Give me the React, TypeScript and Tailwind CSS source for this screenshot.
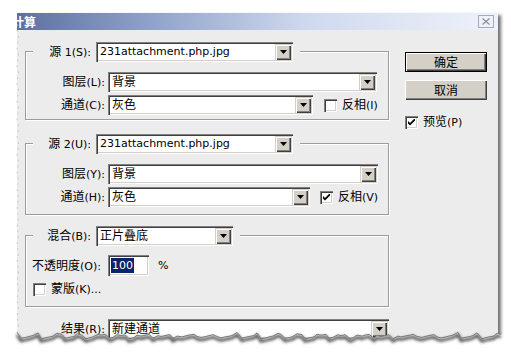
import React from 'react';

const sunken =
  'shadow-[inset_1px_1px_0_#808080,inset_2px_2px_0_#404040,inset_-1px_-1px_0_#ffffff,inset_-2px_-2px_0_#d4d0c8]';
const raised =
  'shadow-[inset_1px_1px_0_#d4d0c8,inset_2px_2px_0_#ffffff,inset_-1px_-1px_0_#404040,inset_-2px_-2px_0_#808080]';

function T({ s }: { s: string }) {
  const parts = s.split(/([\u3400-\u9fff]+)/);
  return (
    <>
      {parts.map((p, i) =>
        i % 2 ? (
          <span key={i} className="font-['Noto_Sans_CJK_SC',sans-serif] text-[12px]">
            {p}
          </span>
        ) : (
          <React.Fragment key={i}>{p}</React.Fragment>
        )
      )}
    </>
  );
}

function Combo({ cls, text }: { cls: string; text: string }) {
  return (
    <div className={`flex h-[20px] shrink-0 items-center bg-white ${sunken} ${cls}`}>
      <span className="flex-1 overflow-hidden whitespace-nowrap pl-[4px] leading-[16px]">
        <T s={text} />
      </span>
      <span className={`mr-[2px] flex h-[16px] w-[16px] items-center justify-center bg-[#d4d0c8] ${raised}`}>
        <svg width="7" height="4" viewBox="0 0 7 4">
          <path d="M0 0h7L3.5 4z" fill="#000" />
        </svg>
      </span>
    </div>
  );
}

function Check({ on }: { on?: boolean }) {
  return (
    <span className={`flex h-[13px] w-[13px] shrink-0 items-center justify-center bg-white ${sunken}`}>
      {on && (
        <svg width="7" height="7" viewBox="0 0 7 7">
          <path d="M0 2L2 4L7 -1V1.6L2 6.6L0 4.6Z" fill="#000" />
        </svg>
      )}
    </span>
  );
}

const pts: { x: number; y: number }[] = [];
{
  let i = 0;
  let x = 17;
  while (x <= 502) {
    const y = 336.5 + (((i * 53) % 11) - 5) * 0.45 + ((i * 17) % 5 === 0 ? -1.8 : 0);
    pts.push({ x, y });
    i++;
    x += 3 + ((i * 7) % 3);
  }
}
const edge = pts.map((p) => `${p.x},${p.y.toFixed(1)}`).join(' ');
const first = pts[0];
const last = pts[pts.length - 1];

const leftPts: string[] = [];
for (let y = 30, i = 0; y <= 336; y += 6, i++) {
  leftPts.push(`${17 + ((i * 5) % 3) * 0.8},${y}`);
}

export default function App() {
  return (
    <div className="relative h-[360px] w-[511px] overflow-hidden bg-white font-['DejaVu_Sans','Noto_Sans_CJK_SC',sans-serif] text-[11px] text-black">
      <div className="ml-[17px] mt-[13px] h-[332px] w-[481px] overflow-hidden bg-[#ececec] shadow-[3px_2px_3px_rgba(0,0,0,0.55)]">
        {/* Title bar */}
        <div className="flex h-[17px] items-center justify-between bg-[linear-gradient(to_right,#5d70a0,#94a6cc_30%,#cfd9ee_60%,#eef2fa)]">
          <span className="-ml-[5px] font-['Noto_Sans_CJK_SC',sans-serif] text-[12px] font-bold leading-none text-white">
            计算
          </span>
          <span className="mr-[4px] flex h-[13px] w-[16px] items-center justify-center border border-[#a3abbb] bg-[#eef1f7]">
            <svg width="8" height="7" viewBox="0 0 8 7">
              <path d="M0.5 0.5L7.5 6.5M7.5 0.5L0.5 6.5" stroke="#8a8f99" strokeWidth="1.2" />
            </svg>
          </span>
        </div>

        {/* Body */}
        <div className="flex">
          <div className="w-[372px] pl-[8px] pt-[21px]">
            {/* Group 1 */}
            <div className="border border-[#9c9c9c] pb-[4px] shadow-[inset_1px_1px_0_#fff,1px_1px_0_#fff]">
              <div className="-mt-[10px] ml-[7px] flex w-fit items-center bg-[#ececec] pr-[7px]">
                <span className="w-[63px] pr-[5px] text-right leading-[14px]">
                  <T s="源 1(S):" />
                </span>
                <Combo cls="w-[197px]" text="231attachment.php.jpg" />
              </div>
              <div className="mt-[10px] flex items-center">
                <span className="w-[82px] pr-[3px] text-right leading-[14px]">
                  <T s="图层(L):" />
                </span>
                <Combo cls="w-[269px]" text="背景" />
              </div>
              <div className="mt-[3px] flex items-center">
                <span className="w-[82px] pr-[3px] text-right leading-[14px]">
                  <T s="通道(C):" />
                </span>
                <Combo cls="w-[205px]" text="灰色" />
                <span className="ml-[11px]">
                  <Check />
                </span>
                <span className="ml-[5px] leading-[14px]">
                  <T s="反相(I)" />
                </span>
              </div>
            </div>

            {/* Group 2 */}
            <div className="mt-[23px] border border-[#9c9c9c] pb-[7px] shadow-[inset_1px_1px_0_#fff,1px_1px_0_#fff]">
              <div className="-mt-[10px] ml-[7px] flex w-fit items-center bg-[#ececec] pr-[7px]">
                <span className="w-[63px] pr-[5px] text-right leading-[14px]">
                  <T s="源 2(U):" />
                </span>
                <Combo cls="w-[197px]" text="231attachment.php.jpg" />
              </div>
              <div className="mt-[10px] flex items-center">
                <span className="w-[82px] pr-[3px] text-right leading-[14px]">
                  <T s="图层(Y):" />
                </span>
                <Combo cls="w-[270px]" text="背景" />
              </div>
              <div className="mt-[3px] flex items-center">
                <span className="w-[82px] pr-[3px] text-right leading-[14px]">
                  <T s="通道(H):" />
                </span>
                <Combo cls="w-[202px]" text="灰色" />
                <span className="ml-[10px]">
                  <Check on />
                </span>
                <span className="ml-[5px] leading-[14px]">
                  <T s="反相(V)" />
                </span>
              </div>
            </div>

            {/* Group 3 */}
            <div className="mt-[20px] border border-[#9c9c9c] pb-[9px] shadow-[inset_1px_1px_0_#fff,1px_1px_0_#fff]">
              <div className="-mt-[10px] ml-[7px] flex w-fit items-center bg-[#ececec] pr-[7px]">
                <span className="w-[63px] pr-[5px] text-right leading-[14px]">
                  <T s="混合(B):" />
                </span>
                <Combo cls="w-[137px]" text="正片叠底" />
              </div>
              <div className="mt-[9px] flex items-center pl-[6px]">
                <span className="w-[76px] leading-[14px]">
                  <T s="不透明度(O):" />
                </span>
                <span className={`flex h-[21px] w-[41px] items-center bg-white pl-[3px] ${sunken}`}>
                  <span className="bg-[#0a246a] px-[1px] leading-[15px] text-white">100</span>
                </span>
                <span className="ml-[9px] leading-[14px]">%</span>
              </div>
              <div className="mt-[5px] flex items-center pl-[7px]">
                <Check />
                <span className="ml-[5px] leading-[14px]">
                  <T s="蒙版(K)..." />
                </span>
              </div>
            </div>

            {/* Result */}
            <div className="mt-[12px] flex items-center">
              <span className="w-[83px] pr-[3px] text-right leading-[14px]">
                <T s="结果(R):" />
              </span>
              <Combo cls="w-[281px]" text="新建通道" />
            </div>
          </div>

          {/* Right column */}
          <div className="ml-[16px] w-[82px] pt-[22px]">
            <div className="flex h-[20px] w-[82px] items-center justify-center border border-black bg-[#d4d0c8] font-['Noto_Sans_CJK_SC',sans-serif] text-[12px] leading-none shadow-[inset_1px_1px_0_#fff,inset_-1px_-1px_0_#404040,inset_-2px_-2px_0_#808080]">
              确定
            </div>
            <div className="mt-[8px] flex h-[20px] w-[82px] items-center justify-center bg-[#d4d0c8] font-['Noto_Sans_CJK_SC',sans-serif] text-[12px] leading-none shadow-[inset_1px_1px_0_#fff,inset_-1px_-1px_0_#404040,inset_-2px_-2px_0_#808080]">
              取消
            </div>
            <div className="mt-[14px] flex items-center">
              <Check on />
              <span className="ml-[5px] leading-[14px]">
                <T s="预览(P)" />
              </span>
            </div>
          </div>
        </div>
      </div>

      {/* Torn edges */}
      <svg className="pointer-events-none absolute left-0 top-0" width="511" height="360">
        <defs>
          <filter id="blur" x="-5%" y="-200%" width="110%" height="500%">
            <feGaussianBlur stdDeviation="1.6" />
          </filter>
        </defs>
        <polyline points={leftPts.join(' ')} fill="none" stroke="#c9c9c9" strokeWidth="1" strokeDasharray="2 4" />
        <polygon points={`0,360 0,${first.y} ${edge} 511,${last.y} 511,360`} fill="#fff" />
        <polyline points={edge} fill="none" stroke="#3a3a3a" strokeWidth="2.5" filter="url(#blur)" transform="translate(0,2.5)" />
        <polyline points={edge} fill="none" stroke="#7a7a7a" strokeWidth="1" />
      </svg>
    </div>
  );
}
